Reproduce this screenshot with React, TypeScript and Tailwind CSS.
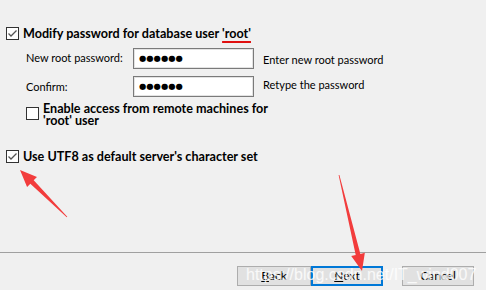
const Check = ({ checked }: { checked?: boolean }) => (
  <svg width="13" height="13" viewBox="0 0 13 13" className="flex-none">
    <rect x="0.5" y="0.5" width="12" height="12" fill="#fff" stroke="#333" />
    {checked && <path d="M2.5 6.5 L5 9 L10.5 3.5" fill="none" stroke="#555" strokeWidth="1.3" />}
  </svg>
);

// tapered red annotation arrow from tail (tx,ty) to tip (px,py)
const arrowPts = (tx: number, ty: number, px: number, py: number) => {
  const len = Math.hypot(px - tx, py - ty);
  const dx = (px - tx) / len;
  const dy = (py - ty) / len;
  const nx = -dy;
  const ny = dx;
  const bx = px - dx * 17;
  const by = py - dy * 17;
  const p = (x: number, y: number, w: number) => `${x + nx * w},${y + ny * w}`;
  return [
    p(tx, ty, 0.4),
    p(bx, by, 2.4),
    p(bx, by, 7),
    `${px},${py}`,
    p(bx, by, -7),
    p(bx, by, -2.4),
    p(tx, ty, -0.4),
  ].join(" ");
};

const PwBox = () => (
  <div className="h-[21px] border border-[#7a7a7a] bg-white shadow-[inset_0_0_0_1px_#e3e3e3] flex items-center pl-[5px]">
    <span className="text-[8.4px] leading-none font-['DejaVu_Sans',sans-serif]">●●●●●●</span>
  </div>
);

export default function App() {
  return (
    <div className="relative w-[486px] h-[290px] bg-[#f0f0f0] overflow-hidden flex flex-col text-[11px] leading-[14px] text-black font-['Segoe_UI','Lato',sans-serif]">
      <div className="flex items-center gap-[4px] pl-[6px] mt-[27px] h-[13px]">
        <Check checked />
        <span className="font-bold text-[12.6px] whitespace-nowrap">
          Modify password for database user{" "}
          <span className="underline decoration-[#e01010] decoration-2 underline-offset-[3px]">'root'</span>
        </span>
      </div>

      <div className="grid grid-cols-[107px_121px_auto] gap-y-[7px] pl-[26px] mt-[8px] items-center whitespace-nowrap">
        <span className="-mt-[2px]">New root password:</span>
        <PwBox />
        <span className="pl-[9px] mt-[2px]">Enter new root password</span>
        <span className="mt-[1px]">Confirm:</span>
        <PwBox />
        <span className="pl-[9px] -mt-[3px]">Retype the password</span>
      </div>

      <div className="flex items-start gap-[4px] pl-[26px] mt-[6px]">
        <div className="mt-[4px]">
          <Check />
        </div>
        <span className="font-bold text-[12.6px] leading-[12px] whitespace-nowrap">
          Enable access from remote machines for
          <br />
          'root' user
        </span>
      </div>

      <div className="flex items-center gap-[4px] pl-[6px] mt-[23px] h-[13px]">
        <Check checked />
        <span className="font-bold text-[12.6px] whitespace-nowrap">Use UTF8 as default server's character set</span>
      </div>

      <div className="flex-1" />
      <div className="h-px bg-[#a0a0a0]" />
      <div className="flex justify-end pr-[12px] pt-[13px] pb-[4px] text-[12px]">
        <button className="w-[74px] h-[20px] bg-[#e1e1e1] border border-[#adadad] leading-none">
          <span className="underline">B</span>ack
        </button>
        <button className="w-[72px] h-[20px] bg-[#e1e1e1] border-2 border-[#0078d7] leading-none">
          <span className="underline">N</span>ext
        </button>
        <button className="ml-[19px] w-[72px] h-[20px] bg-[#e1e1e1] border border-[#adadad] leading-none">Cancel</button>
      </div>

      <span className="absolute left-[246px] top-[265px] text-[16px] leading-[20px] text-white/80 font-['Liberation_Sans',sans-serif] whitespace-nowrap pointer-events-none">
        https://blog.csdn.net/IT_wind007
      </span>

      <svg className="absolute inset-0 pointer-events-none" width="486" height="290">
        <polygon points={arrowPts(67, 217, 20, 170)} fill="#f23c3c" />
        <polygon points={arrowPts(339, 175, 362, 271)} fill="#f23c3c" />
      </svg>
    </div>
  );
}
